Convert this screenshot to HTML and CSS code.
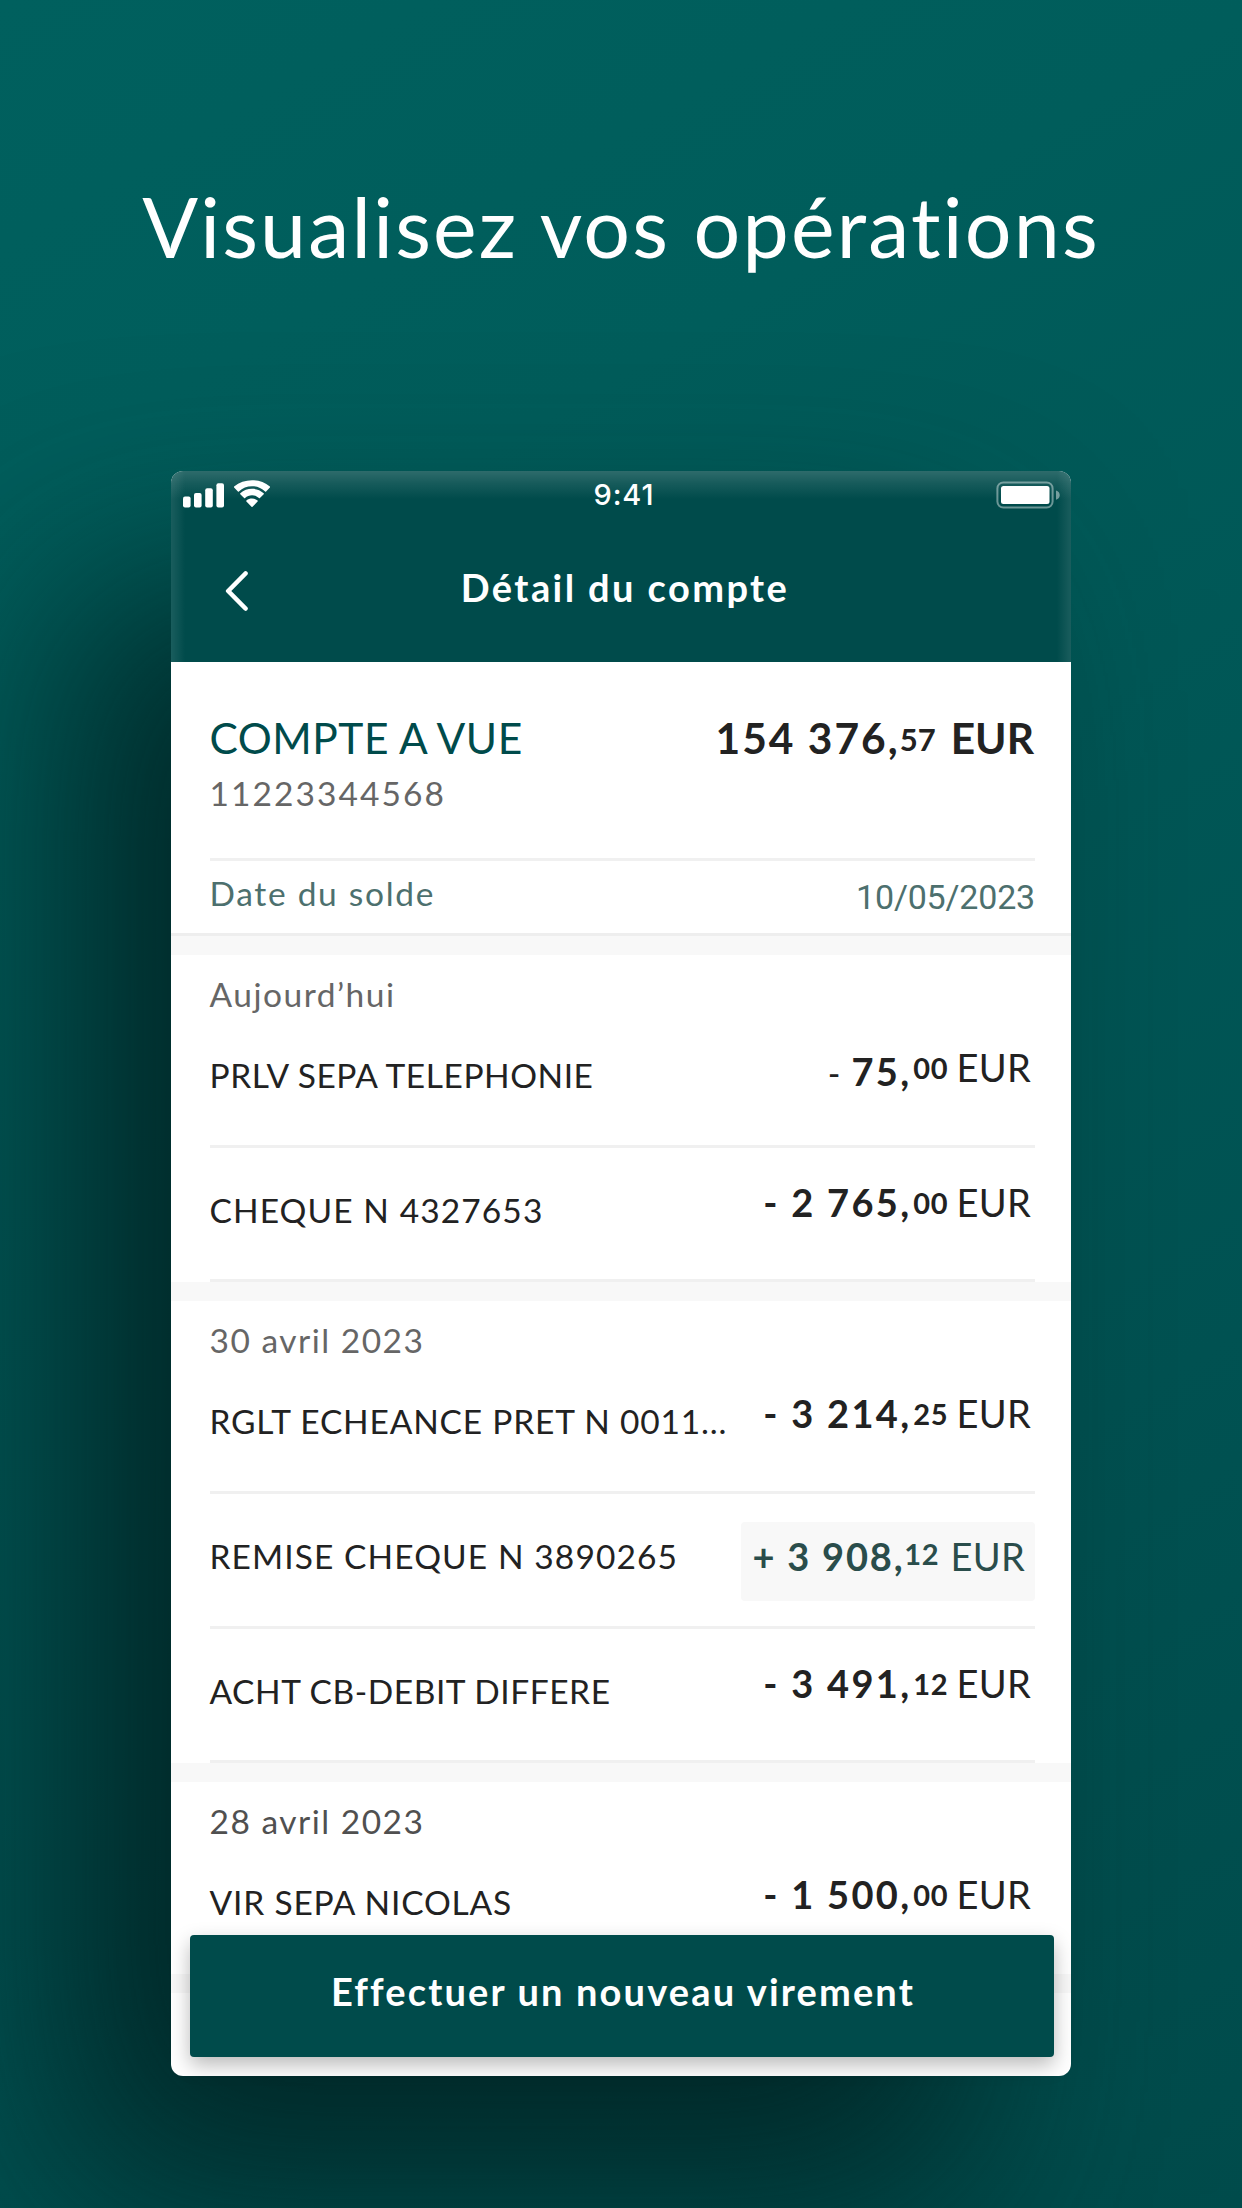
FILE: index.html
```html
<!DOCTYPE html>
<html lang="fr">
<head>
  <meta charset="UTF-8">
  <meta name="viewport" content="width=device-width, initial-scale=1.0">
  <title>Visualisez vos opérations</title>
  <link rel="stylesheet" href="styles.css">
</head>
<body>
  <h1 class="headline">Visualisez vos opérations</h1>

  <main class="phone">
    <header class="top">
      <div class="status-bar">
        <div class="status-left">
          <svg class="signal" width="42" height="25" viewBox="0 0 42 25">
            <rect x="0" y="13.5" width="7.6" height="11" rx="2"></rect>
            <rect x="11" y="10" width="7.6" height="14.5" rx="2"></rect>
            <rect x="22.2" y="5.3" width="7.6" height="19.2" rx="2"></rect>
            <rect x="33.4" y="0.3" width="7.6" height="24.2" rx="2"></rect>
          </svg>
          <svg class="wifi" width="38" height="28" viewBox="0 0 38 28">
            <path d="M19 6.2c5 0 9.600 1.900 13.100 5.200.3.300.7.300 1 0l3.800-3.800c.3-.300.3-.700 0-1C26.900-1.900 11.100-1.900 1.100 6.600c-.3.300-.3.700 0 1l3.800 3.800c.3.300.7.300 1 0C9.400 8.100 14 6.200 19 6.200z"></path>
            <path d="M19 15.200c2.600 0 5 1 6.900 2.700.3.300.7.300 1 0l3.800-3.700c.3-.300.3-.700 0-1-6.600-5.900-16.800-5.900-23.400 0-.3.300-.3.700 0 1l3.800 3.700c.3.300.7.300 1 0 1.900-1.700 4.300-2.700 6.900-2.700z"></path>
            <path d="M24.600 21.500c.3-.300.3-.700 0-1-3.200-2.600-8-2.600-11.200 0-.3.300-.3.700 0 1l5.100 5.200c.3.300.7.300 1 0z"></path>
          </svg>
        </div>
        <div class="clock">9:41</div>
        <svg class="battery" width="66" height="29" viewBox="0 0 66 29">
          <rect x="1.400" y="1.400" width="55.200" height="25.200" rx="6" fill="none" stroke="#fff" stroke-width="2" opacity="0.42"></rect>
          <rect x="5" y="5" width="48.500" height="18" rx="2.500" fill="#fff"></rect>
          <path d="M60 9.500c5 1.500 5 7.800 0 9.300z" fill="#fff" opacity="0.45"></path>
        </svg>
      </div>
      <nav class="nav-bar">
        <svg class="back" width="24" height="42" viewBox="0 0 24 42">
          <path d="M20.500 2.500 3.200 20 20.500 37.500" fill="none" stroke="#fff" stroke-width="4.600" stroke-linecap="round" stroke-linejoin="round"></path>
        </svg>
        <h2 class="nav-title">Détail du compte</h2>
      </nav>
    </header>

    <section class="account">
      <div class="account-main">
        <div>
          <div class="account-name">COMPTE A VUE</div>
          <div class="account-number">11223344568</div>
        </div>
        <div class="balance"><span class="balance-int">154 376,</span><span class="balance-cents">57</span><span class="balance-cur">EUR</span></div>
      </div>
      <div class="account-date">
        <span>Date du solde</span>
        <span class="date-value">10/05/2023</span>
      </div>
    </section>

    <section class="group">
      <h3 class="day">Aujourd’hui</h3>
      <div class="operation">
        <span class="label">PRLV SEPA TELEPHONIE</span>
        <span class="amount low"><span class="sign">-</span><span class="int">75,</span><span class="cents">00</span><span class="cur">EUR</span></span>
      </div>
      <div class="operation">
        <span class="label digits">CHEQUE N 4327653</span>
        <span class="amount"><span class="int">- 2 765,</span><span class="cents">00</span><span class="cur">EUR</span></span>
      </div>
    </section>

    <section class="group">
      <h3 class="day">30 avril 2023</h3>
      <div class="operation">
        <span class="label wide">RGLT ECHEANCE PRET N 0011...</span>
        <span class="amount"><span class="int">- 3 214,</span><span class="cents">25</span><span class="cur">EUR</span></span>
      </div>
      <div class="operation">
        <span class="label digits">REMISE CHEQUE N 3890265</span>
        <span class="amount credit"><span class="int">+ 3 908,</span><span class="cents">12</span><span class="cur">EUR</span></span>
      </div>
      <div class="operation">
        <span class="label">ACHT CB-DEBIT DIFFERE</span>
        <span class="amount"><span class="int">- 3 491,</span><span class="cents">12</span><span class="cur">EUR</span></span>
      </div>
    </section>

    <section class="group">
      <h3 class="day dark">28 avril 2023</h3>
      <div class="operation">
        <span class="label wide">VIR SEPA NICOLAS</span>
        <span class="amount"><span class="int">- 1 500,</span><span class="cents">00</span><span class="cur">EUR</span></span>
      </div>
    </section>

    <button class="transfer">Effectuer un nouveau virement</button>
  </main>
</body>
</html>
```
FILE: styles.css
```css
:root {
  --green: #004b4b;
  --green-soft: #4d706e;
  --ink: #222222;
  --grey: #666666;
  --line: #f0f0f0;
  --band: #f8f8f8;
}

* {
  box-sizing: border-box;
}

body {
  margin: 0;
  height: 2208px;
  overflow: hidden;
  padding-top: 177px;
  font-family: Lato, "Open Sans", sans-serif;
  font-variant-ligatures: none;
  background: linear-gradient(150deg, #00605e 0%, #005d5b 25%, #005252 70%, #004b4b 100%);
  color: var(--ink);
}

h1, h2, h3 {
  margin: 0;
  font-weight: 400;
}

.headline {
  font-size: 82.5px;
  line-height: 100px;
  letter-spacing: 2.2px;
  text-align: center;
  color: #fff;
}

.phone {
  position: relative;
  width: 900px;
  height: 1605px;
  margin: 194px auto 0;
  border-radius: 12px;
  background: #fff;
  box-shadow: -108px 118px 215px rgba(0, 32, 32, 0.85);
}

/* status bar + navigation */
.top {
  height: 191px;
  border-radius: 12px 12px 0 0;
  background:
    linear-gradient(to right, rgba(255, 255, 255, 0.1), transparent 14px),
    linear-gradient(to left, rgba(255, 255, 255, 0.1), transparent 14px),
    linear-gradient(to bottom, rgba(255, 255, 255, 0.18), rgba(255, 255, 255, 0.09) 12px, transparent 28px),
    var(--green);
  color: #fff;
}

.status-bar {
  display: grid;
  grid-template-columns: 1fr auto 1fr;
  height: 46px;
  padding: 0 9px 0 12px;
}

.status-left {
  display: flex;
  gap: 8px;
  padding-top: 9px;
}

.signal {
  margin-top: 3px;
  fill: #fff;
}

.wifi {
  fill: #fff;
}

.clock {
  padding: 9px 0 0 3px;
  font-family: Inter, sans-serif;
  font-size: 29px;
  font-weight: 500;
  line-height: 30px;
  letter-spacing: 0.9px;
}

.battery {
  justify-self: end;
  margin-top: 10px;
}

.nav-bar {
  display: grid;
  grid-template-columns: 1fr auto 1fr;
  padding: 45px 46px 0 54px;
}

.back {
  margin-top: 9px;
}

.nav-title {
  font-size: 38px;
  font-weight: 700;
  line-height: 50px;
  letter-spacing: 2.4px;
}

/* account summary */
.account {
  height: 274px;
  border-bottom: 3px solid #eeeeee;
  box-shadow: 0 19px 0 var(--band);
}

.account-main {
  display: flex;
  justify-content: space-between;
  height: 199px;
  margin: 0 36px 0 38.5px;
  padding-top: 51px;
  border-bottom: 3px solid var(--line);
}

.account-name {
  font-size: 42.5px;
  line-height: 50px;
  letter-spacing: 0.5px;
  color: var(--green);
}

.account-number {
  margin-top: 10px;
  font-size: 33.5px;
  line-height: 40px;
  letter-spacing: 2.07px;
  color: var(--grey);
}

.balance {
  padding-right: 1px;
  font-size: 42.5px;
  font-weight: 700;
  line-height: 50px;
  white-space: nowrap;
}

.balance-int {
  letter-spacing: 2px;
}

.balance-cents {
  margin-right: 15px;
  font-size: 31px;
  line-height: 1;
  vertical-align: 3px;
}

.account-date {
  display: flex;
  justify-content: space-between;
  margin: 0 36px 0 38.5px;
  padding-top: 12px;
  font-size: 33.5px;
  line-height: 40px;
  letter-spacing: 1.7px;
  color: var(--green-soft);
}

.date-value {
  margin-top: 4px;
  font-family: Roboto, sans-serif;
  font-size: 34px;
  letter-spacing: -0.2px;
}

/* operations */
.group {
  margin-top: 19px;
  box-shadow: 0 19px 0 var(--band);
}

.day {
  height: 58px;
  padding: 19px 38px 0 38.5px;
  font-size: 33.5px;
  line-height: 40px;
  letter-spacing: 1.5px;
  color: var(--grey);
}

.day.dark {
  color: #505050;
}

.operation {
  display: flex;
  justify-content: space-between;
  align-items: flex-start;
  height: 135px;
  margin: 0 36px 0 38.5px;
  border-bottom: 3px solid var(--line);
}

.operation:last-child {
  height: 134px;
}

.label {
  padding-top: 42px;
  font-size: 33.5px;
  line-height: 40px;
  letter-spacing: 0.55px;
  white-space: nowrap;
}

.label.digits {
  letter-spacing: 1.1px;
}

.label.wide {
  letter-spacing: 0.82px;
}

.amount {
  padding: 34px 4px 0 0;
  font-size: 38px;
  line-height: 40px;
  white-space: nowrap;
}

.int {
  font-weight: 700;
  letter-spacing: 2.3px;
}

.sign {
  margin-right: 11px;
  font-size: 34px;
}

.cents {
  margin: 0 8px 0 2px;
  font-size: 29px;
  font-weight: 700;
  line-height: 1;
  letter-spacing: 0.7px;
  vertical-align: 3px;
}

.cur {
  letter-spacing: 0.3px;
}

.low .sign,
.low .int {
  vertical-align: -4px;
  line-height: 1;
}

.credit {
  height: 79px;
  margin-top: 28px;
  padding: 14px 10px 0 11px;
  border-radius: 4px;
  background: var(--band);
  color: #2a4d4b;
}

.credit .int {
  letter-spacing: 1.8px;
}

.credit .cents {
  margin-left: 0;
  margin-right: 11px;
  vertical-align: 6px;
}

.transfer {
  position: absolute;
  left: 19px;
  right: 17px;
  bottom: 19px;
  height: 122px;
  padding: 0 0 11px 2px;
  border: none;
  border-radius: 4px;
  background: var(--green);
  box-shadow: 0 8px 20px rgba(0, 0, 0, 0.28);
  color: #fff;
  font-family: inherit;
  font-size: 38px;
  font-weight: 700;
  letter-spacing: 2.15px;
}
```
